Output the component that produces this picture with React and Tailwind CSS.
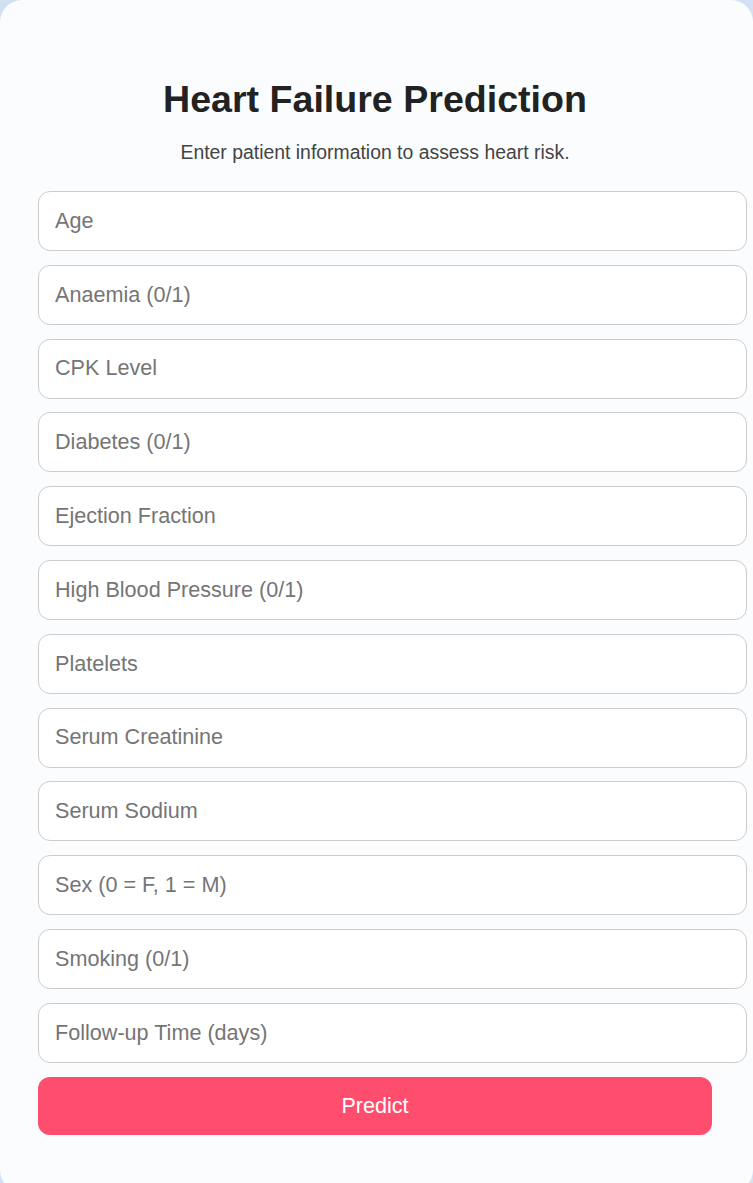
import React, { useState } from 'react';

const fields = [
    { name: 'age', label: 'Age' },
    { name: 'anaemia', label: 'Anaemia (0/1)' },
    { name: 'cpk', label: 'CPK Level' },
    { name: 'diabetes', label: 'Diabetes (0/1)' },
    { name: 'ejection', label: 'Ejection Fraction' },
    { name: 'bp', label: 'High Blood Pressure (0/1)' },
    { name: 'platelets', label: 'Platelets' },
    { name: 'creatinine', label: 'Serum Creatinine' },
    { name: 'sodium', label: 'Serum Sodium' },
    { name: 'sex', label: 'Sex (0 = F, 1 = M)' },
    { name: 'smoking', label: 'Smoking (0/1)' },
    { name: 'time', label: 'Follow-up Time (days)' },
];

const App = () => {
    const [values, setValues] = useState({});

    const handleChange = (e) => {
        setValues(prev => ({ ...prev, [e.target.name]: e.target.value }));
    };

    return (
        <div className="min-h-[1183px] bg-[#d3dff3] font-['Liberation_Sans',Arial,sans-serif]">
            <div className="w-[753px] min-h-[1192px] bg-[#fafcfe] rounded-[22px] pl-[38px] pr-[41px] pt-[77px]">
                {/* Header */}
                <h1 className="text-center text-[37.6px] leading-[44px] font-bold text-[#222]">Heart Failure Prediction</h1>
                <p className="text-center text-[19.4px] leading-[22px] text-[#444] mt-[20px]">
                    Enter patient information to assess heart risk.
                </p>

                {/* Form */}
                <form className="flex flex-col gap-[13.8px] mt-[28px]" onSubmit={e => e.preventDefault()}>
                    {fields.map(f => (
                        <input key={f.name} name={f.name} type="text" placeholder={f.label}
                            value={values[f.name] || ''} onChange={handleChange}
                            className="box-content w-[675px] h-[26px] py-[16px] px-[16px] bg-white border border-[#cccccc] rounded-[12px] text-[21.6px] text-[#333] placeholder:text-[#757575] outline-none"
                        />
                    ))}
                    <button type="submit"
                        className="w-[674px] h-[58px] bg-[#ff4d6d] text-white text-[21.6px] rounded-[12px] mt-[0.2px]">
                        Predict
                    </button>
                </form>
            </div>
        </div>
    );
};

export default App;
